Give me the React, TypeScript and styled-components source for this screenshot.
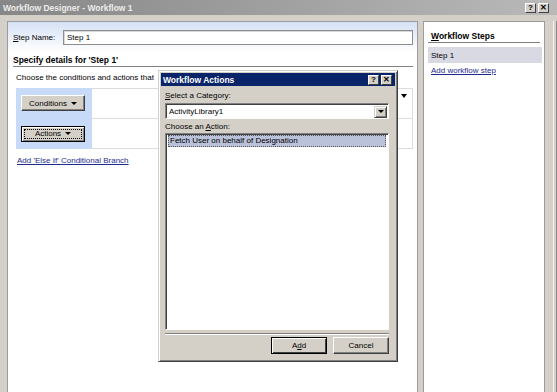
import styled, { createGlobalStyle } from 'styled-components';

const GlobalStyle = createGlobalStyle`
  html, body {
    margin: 0;
    padding: 0;
  }
  body {
    width: 557px;
    height: 392px;
    overflow: hidden;
    font-family: "Liberation Sans", Arial, sans-serif;
    font-size: 8px;
    color: #000;
  }
`;

export default function App() {
  return (
    <>
      <GlobalStyle />
      <Window>
        <TitleBar>
          <TitleText>Workflow Designer - Workflow 1</TitleText>
          <Captions>
            <CaptionButton>?</CaptionButton>
            <CaptionButton>✕</CaptionButton>
          </Captions>
        </TitleBar>
        <Body>
          <LeftPanel>
            <NameRow>
              <Label>
                <u>S</u>tep Name:
              </Label>
              <TextInput>Step 1</TextInput>
            </NameRow>
            <SectionHeader>Specify details for 'Step 1'</SectionHeader>
            <Hint>Choose the conditions and actions that</Hint>
            <RuleTable>
              <BlueCell>
                <DropButton>
                  Conditions <Arrow />
                </DropButton>
              </BlueCell>
              <RuleCell>
                <MenuArrow />
              </RuleCell>
              <BlueCell>
                <DropButton focused>
                  <FocusRing>
                    Actions <Arrow />
                  </FocusRing>
                </DropButton>
              </BlueCell>
              <RuleCell last />
            </RuleTable>
            <Link indent={4} gap={7}>
              Add 'Else If' Conditional Branch
            </Link>
          </LeftPanel>
          <RightPanel>
            <StepsHeader>
              <u>W</u>orkflow Steps
            </StepsHeader>
            <StepRow>Step 1</StepRow>
            <Link indent={3} gap={3}>
              Add workflow step
            </Link>
          </RightPanel>
          <FrameEdge />
        </Body>

        <Dialog>
          <DialogTitle>
            <span>Workflow Actions</span>
            <Captions>
              <CaptionButton>?</CaptionButton>
              <CaptionButton>✕</CaptionButton>
            </Captions>
          </DialogTitle>
          <DialogBody>
            <FieldLabel>
              <u>S</u>elect a Category:
            </FieldLabel>
            <Select>
              <span>ActivityLibrary1</span>
              <SelectButton>
                <Arrow />
              </SelectButton>
            </Select>
            <FieldLabel>
              Choose an <u>A</u>ction:
            </FieldLabel>
            <ListBox>
              <ListItem selected>Fetch User on behalf of Designation</ListItem>
            </ListBox>
            <Separator />
            <ButtonRow>
              <PushButton isDefault>
                A<u>d</u>d
              </PushButton>
              <PushButton>Cancel</PushButton>
            </ButtonRow>
          </DialogBody>
        </Dialog>
      </Window>
    </>
  );
}

const Window = styled.div`
  position: relative;
  width: 557px;
  height: 392px;
  background: #d4d0c8;
  display: flex;
  flex-direction: column;
  overflow: hidden;
`;

const TitleBar = styled.div`
  height: 15px;
  flex: none;
  display: flex;
  align-items: center;
  justify-content: space-between;
  padding: 0 8px 0 3px;
  background: linear-gradient(to right, #878787, #b9b9b9);
`;

const TitleText = styled.span`
  color: #ececec;
  font-weight: bold;
  font-size: 8.5px;
`;

const Captions = styled.div`
  display: flex;
  gap: 2px;
`;

const CaptionButton = styled.div`
  width: 11px;
  height: 10px;
  box-sizing: border-box;
  background: #d4d0c8;
  border: 1px solid;
  border-color: #fff #404040 #404040 #fff;
  display: flex;
  align-items: center;
  justify-content: center;
  font-size: 8px;
  font-weight: bold;
  line-height: 1;
  color: #000;
`;

const Body = styled.div`
  flex: 1;
  display: flex;
  gap: 5px;
  padding: 6px 0 0 7px;
  min-height: 0;
`;

const LeftPanel = styled.div`
  flex: none;
  width: 411px;
  box-sizing: border-box;
  border: 1px solid #9c9ca0;
  border-bottom: none;
  padding: 0 4px 0 5px;
  background: linear-gradient(to bottom, #d5e1f5 0px, #ffffff 30px);
  display: flex;
  flex-direction: column;
`;

const NameRow = styled.div`
  display: flex;
  align-items: center;
  margin-top: 8px;
`;

const Label = styled.span`
  width: 50px;
  flex: none;
`;

const TextInput = styled.div`
  flex: 1;
  height: 15px;
  box-sizing: border-box;
  border: 1px solid #8d8d8d;
  box-shadow: inset 1px 1px 0 #d8d8d8;
  background: #fff;
  padding: 0 3px;
  display: flex;
  align-items: center;
`;

const SectionHeader = styled.div`
  margin-top: 9px;
  font-weight: bold;
  font-size: 8.5px;
  line-height: 12px;
  border-bottom: 1px solid #808080;
`;

const Hint = styled.div`
  margin-top: 6px;
  padding-left: 3px;
  line-height: 10px;
  white-space: nowrap;
`;

const RuleTable = styled.div`
  margin: 5px 0 0 3px;
  display: grid;
  grid-template-columns: 76px 1fr;
  grid-template-rows: 30px 31px;
`;

const BlueCell = styled.div`
  background: #c7daf7;
  display: flex;
  align-items: center;
  padding-left: 5px;
`;

const RuleCell = styled.div<{ last?: boolean }>`
  border-top: 1px solid #dcdcdc;
  border-right: 1px solid #dcdcdc;
  border-bottom: ${(p) => (p.last ? '1px solid #dcdcdc' : 'none')};
  display: flex;
  justify-content: flex-end;
  padding: 5px 5px 0 0;
`;

const MenuArrow = styled.div`
  width: 0;
  height: 0;
  border-left: 3px solid transparent;
  border-right: 3px solid transparent;
  border-top: 4px solid #000;
`;

const Arrow = styled.span`
  display: inline-block;
  width: 0;
  height: 0;
  margin-left: 4px;
  border-left: 3px solid transparent;
  border-right: 3px solid transparent;
  border-top: 3px solid #000;
  vertical-align: middle;
`;

const DropButton = styled.div<{ focused?: boolean }>`
  width: 64px;
  height: 16px;
  box-sizing: border-box;
  background: #d4d0c8;
  border: 1px solid;
  border-color: ${(p) => (p.focused ? '#000' : '#fff #404040 #404040 #fff')};
  box-shadow: ${(p) =>
    p.focused ? 'inset 1px 1px 0 #fff, inset -1px -1px 0 #808080' : 'inset -1px -1px 0 #808080'};
  display: flex;
  align-items: center;
  justify-content: center;
  padding: 2px;
`;

const FocusRing = styled.div`
  flex: 1;
  align-self: stretch;
  border: 1px dotted #000;
  display: flex;
  align-items: center;
  justify-content: center;
`;

const Link = styled.div<{ indent: number; gap: number }>`
  margin-top: ${(p) => p.gap}px;
  padding-left: ${(p) => p.indent}px;
  color: #1e2c8e;
  text-decoration: underline;
  line-height: 10px;
`;

const RightPanel = styled.div`
  flex: none;
  width: 122px;
  box-sizing: border-box;
  border: 1px solid #9c9ca0;
  border-bottom: none;
  background: #fff;
  padding: 0 2px 0 4px;
  display: flex;
  flex-direction: column;
`;

const FrameEdge = styled.div`
  flex: none;
  width: 4px;
  box-sizing: border-box;
  margin-left: 3px;
  border-left: 1px solid #f4f3ef;
  border-right: 1px solid #8a8a8a;
`;

const StepsHeader = styled.div`
  margin-top: 8px;
  padding-left: 3px;
  font-weight: bold;
  font-size: 8.5px;
  line-height: 12px;
  border-bottom: 1px solid #808080;
  margin-right: 2px;
`;

const StepRow = styled.div`
  margin-top: 4px;
  height: 16px;
  background: #d9d9e3;
  padding-left: 3px;
  display: flex;
  align-items: center;
`;

const Dialog = styled.div`
  position: absolute;
  left: 158px;
  top: 70px;
  width: 240px;
  height: 292px;
  box-sizing: border-box;
  background: #d4d0c8;
  border: 1px solid;
  border-color: #d4d0c8 #404040 #404040 #d4d0c8;
  box-shadow: inset 1px 1px 0 #fff, inset -1px -1px 0 #808080;
  padding: 2px;
  display: flex;
  flex-direction: column;
`;

const DialogTitle = styled.div`
  height: 13px;
  flex: none;
  background: #0a246a;
  color: #fff;
  font-weight: bold;
  font-size: 8.5px;
  display: flex;
  align-items: center;
  justify-content: space-between;
  padding: 0 3px 0 2px;
`;

const DialogBody = styled.div`
  flex: 1;
  display: flex;
  flex-direction: column;
  padding: 5px 6px 0 4px;
`;

const FieldLabel = styled.div`
  line-height: 10px;
  margin-bottom: 2px;
  &:not(:first-child) {
    margin-top: 3px;
    margin-bottom: 1px;
  }
`;

const Select = styled.div`
  height: 16px;
  box-sizing: border-box;
  border: 1px solid;
  border-color: #808080 #fff #fff #808080;
  box-shadow: inset 1px 1px 0 #404040;
  background: #fff;
  display: flex;
  align-items: center;
  justify-content: space-between;
  padding: 1px 1px 0 3px;
`;

const SelectButton = styled.div`
  width: 13px;
  height: 12px;
  box-sizing: border-box;
  background: #d4d0c8;
  border: 1px solid;
  border-color: #d4d0c8 #404040 #404040 #d4d0c8;
  box-shadow: inset 1px 1px 0 #fff, inset -1px -1px 0 #808080;
  display: flex;
  align-items: center;
  justify-content: center;

  span {
    margin-left: 0;
  }
`;

const ListBox = styled.div`
  height: 197px;
  box-sizing: border-box;
  border: 1px solid;
  border-color: #808080 #fff #fff #808080;
  box-shadow: inset 1px 1px 0 #404040;
  background: #fff;
  padding: 1px 2px;
`;

const ListItem = styled.div<{ selected?: boolean }>`
  height: 10px;
  line-height: 9px;
  padding-left: 1px;
  background: ${(p) => (p.selected ? '#bac2d9' : 'transparent')};
  border: 1px dotted ${(p) => (p.selected ? '#555' : 'transparent')};
`;

const Separator = styled.div`
  margin-top: 3px;
  border-top: 1px solid #808080;
  border-bottom: 1px solid #fff;
`;

const ButtonRow = styled.div`
  margin-top: 2px;
  display: flex;
  justify-content: flex-end;
  gap: 6px;
`;

const PushButton = styled.div<{ isDefault?: boolean }>`
  width: 56px;
  height: 17px;
  box-sizing: border-box;
  background: #d4d0c8;
  border: 1px solid;
  border-color: ${(p) => (p.isDefault ? '#000' : '#fff #404040 #404040 #fff')};
  box-shadow: ${(p) =>
    p.isDefault ? 'inset 1px 1px 0 #fff, inset -1px -1px 0 #404040' : 'inset -1px -1px 0 #808080'};
  display: flex;
  align-items: center;
  justify-content: center;
`;
